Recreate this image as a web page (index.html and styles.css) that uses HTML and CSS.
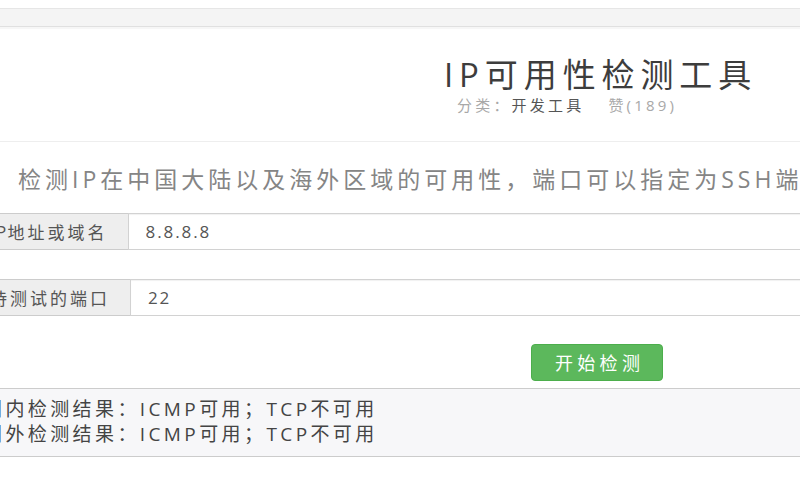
FILE: index.html
```html
<!DOCTYPE html>
<html lang="zh-CN">
<head>
<meta charset="utf-8">
<title>IP可用性检测工具</title>
<link rel="stylesheet" href="styles.css">
</head>
<body>
  <div class="topbar"></div>
  <div class="page">
    <header class="head">
      <h1 class="title">IP可用性检测工具</h1>
      <div class="meta"><span class="muted">分类：</span><span class="cat">开发工具</span><span class="likes">赞(189)</span></div>
    </header>
    <p class="desc">检测IP在中国大陆以及海外区域的可用性，端口可以指定为SSH端口</p>
    <form class="form">
      <div class="group">
        <span class="addon"><span class="lat">IP</span>地址或域名</span>
        <input class="control" type="text" value="8.8.8.8">
      </div>
      <div class="group">
        <span class="addon">待测试的端口</span>
        <input class="control" type="text" value="22">
      </div>
      <div class="actions">
        <button class="btn" type="button">开始检测</button>
      </div>
    </form>
    <div class="result">
      <div class="line">国内检测结果：ICMP可用；TCP不可用</div>
      <div class="line">国外检测结果：ICMP可用；TCP不可用</div>
    </div>
  </div>
</body>
</html>
```
FILE: styles.css
```css
* { box-sizing: border-box; }

html, body {
  margin: 0;
  background: #fff;
  overflow: hidden;
}

body {
  padding-top: 8px;
  font-family: "Open Sans", "Noto Sans CJK SC", sans-serif;
  color: #444;
}

.topbar {
  height: 19px;
  background: #f4f4f4;
  border-top: 1px solid #e6e6e6;
  border-bottom: 1px solid #e0e0e0;
  box-shadow: 0 2px 1px #f6f6f6;
}

.page {
  margin-left: -31px;
  width: 1000px;
}

.head {
  padding: 31px 0 26px 475px;
  border-bottom: 1px solid #eeeeee;
}

.title {
  margin: 0;
  font-size: 33px;
  line-height: 33px;
  font-weight: 400;
  letter-spacing: 5.9px;
  color: #3d3d3d;
  white-space: nowrap;
}

.meta {
  margin-top: 5px;
  padding-left: 13px;
  font-size: 15px;
  line-height: 19px;
  letter-spacing: 3.2px;
  white-space: nowrap;
}

.muted { color: #a8a8a8; }
.cat { color: #555; }
.likes { color: #a8a8a8; margin-left: 24px; }

.desc {
  margin: 26px 0 0;
  padding-left: 49px;
  font-size: 23px;
  line-height: 23px;
  letter-spacing: 4px;
  color: #858585;
  white-space: nowrap;
}

.form { margin: 0; }

.group {
  display: flex;
  height: 37px;
  margin-top: 29px;
}

.desc + .form .group:first-child { margin-top: 22px; }

.addon {
  display: flex;
  align-items: center;
  padding: 0 20px;
  background: #eeeeee;
  border: 1px solid #cccccc;
  border-right: 0;
  font-size: 17px;
  letter-spacing: 3px;
  color: #555;
  white-space: nowrap;
}

.lat { letter-spacing: 1.3px; }

.control {
  flex: 1;
  height: 37px;
  margin: 0;
  padding: 0 0 0 17px;
  border: 1px solid #d2d2d2;
  border-radius: 0;
  box-shadow: inset 0 1px 1px rgba(0, 0, 0, 0.06);
  font-family: "Open Sans", "Noto Sans CJK SC", sans-serif;
  font-size: 17px;
  letter-spacing: 1.9px;
  color: #555;
  background: #fff;
  outline: none;
}

.actions {
  display: flex;
  margin-top: 28px;
  padding-left: 562px;
}

.btn {
  height: 37px;
  margin: 0;
  padding: 0 18px 0 23px;
  background: #5cb85c;
  border: 1px solid #4cae4c;
  border-radius: 4px;
  color: #fff;
  font-family: "Open Sans", "Noto Sans CJK SC", sans-serif;
  font-size: 18px;
  letter-spacing: 4.3px;
  line-height: 1;
  cursor: pointer;
}

.result {
  margin-top: 7px;
  padding: 8px 0 9px 14px;
  background: #f7f7f9;
  border-top: 1px solid #cccccc;
  border-bottom: 1px solid #cccccc;
}

.line {
  font-size: 19px;
  line-height: 25px;
  letter-spacing: 3.4px;
  color: #444;
  white-space: nowrap;
}
```
